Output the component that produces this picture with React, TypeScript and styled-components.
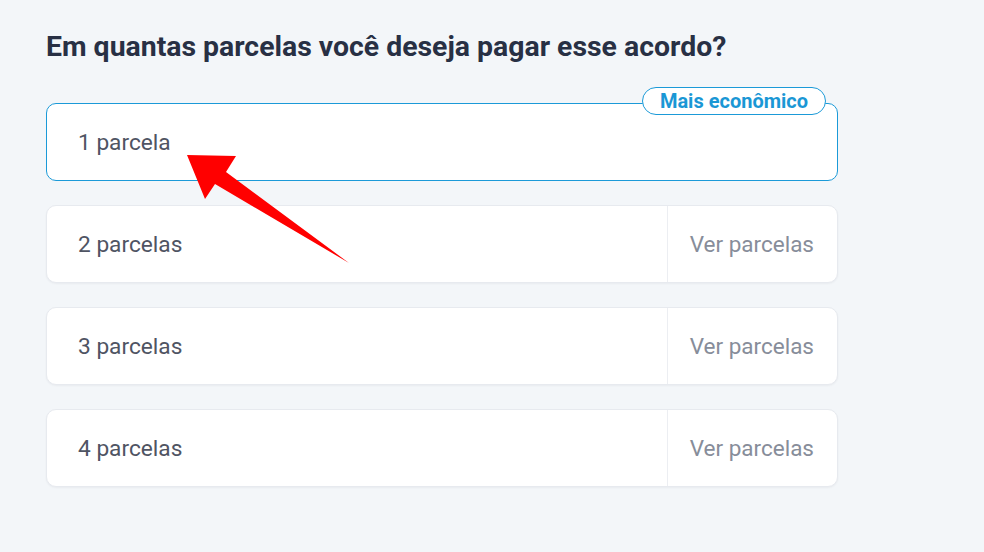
import styled, { createGlobalStyle } from "styled-components";

const GlobalStyle = createGlobalStyle`
  html, body {
    margin: 0;
    padding: 0;
    background: #f3f6f9;
    font-family: Roboto, "Liberation Sans", Arial, sans-serif;
  }
`;

const Page = styled.div`
  position: relative;
  width: 984px;
  height: 552px;
  box-sizing: border-box;
  padding: 30px 0 0 46px;
  overflow: hidden;
`;

const Title = styled.h2`
  margin: 0 0 39px 0;
  font-size: 28.4px;
  line-height: 34px;
  font-weight: 700;
  color: #283044;
`;

const List = styled.div`
  display: flex;
  flex-direction: column;
  gap: 24px;
  width: 792px;
`;

const Card = styled.div<{ selected?: boolean }>`
  position: relative;
  display: flex;
  align-items: stretch;
  height: 78px;
  box-sizing: border-box;
  background: #fff;
  border-radius: 10px;
  border: 1px solid ${(p) => (p.selected ? "#1b9ad8" : "#e7eaef")};
  box-shadow: ${(p) => (p.selected ? "none" : "0 1px 2px rgba(30, 40, 60, 0.05)")};
`;

const Label = styled.div`
  flex: 1;
  display: flex;
  align-items: center;
  padding-left: 31px;
  font-size: 22.7px;
  color: #4f5463;
`;

const SeeMore = styled.div`
  display: flex;
  align-items: center;
  padding: 0 23px 0 22px;
  border-left: 1px solid #eceef2;
  font-size: 22.5px;
  color: #878d9a;
`;

const Badge = styled.span`
  position: absolute;
  top: -17px;
  right: 11px;
  height: 28px;
  box-sizing: border-box;
  padding: 0 17px;
  display: flex;
  align-items: center;
  background: #fff;
  border: 1.5px solid #1b9ad8;
  border-radius: 14px;
  font-size: 20px;
  font-weight: 700;
  color: #1a97d5;
`;

const Arrow = styled.svg`
  position: absolute;
  left: 0;
  top: 0;
  pointer-events: none;
`;

const options = [1, 2, 3, 4];

export default function App() {
  return (
    <>
      <GlobalStyle />
      <Page>
        <Title>Em quantas parcelas você deseja pagar esse acordo?</Title>
        <List>
          {options.map((n) =>
            n === 1 ? (
              <Card key={n} selected>
                <Label>1 parcela</Label>
                <Badge>Mais econômico</Badge>
              </Card>
            ) : (
              <Card key={n}>
                <Label>{`${n} parcelas`}</Label>
                <SeeMore>Ver parcelas</SeeMore>
              </Card>
            )
          )}
        </List>
        <Arrow width="984" height="552" viewBox="0 0 984 552">
          <polygon
            points="187,155 236,156 226,172 349,263 215,184 205,199"
            fill="#ff0000"
          />
        </Arrow>
      </Page>
    </>
  );
}
